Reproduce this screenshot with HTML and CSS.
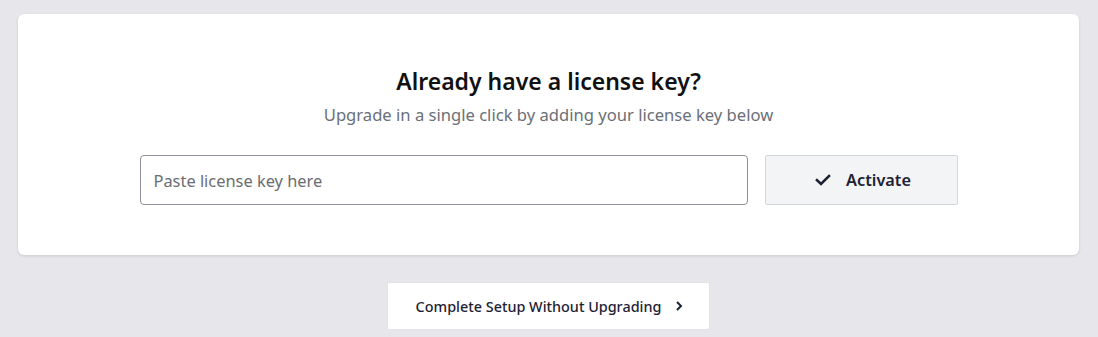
FILE: index.html
```html
<!DOCTYPE html>
<html lang="en">
<head>
  <meta charset="UTF-8">
  <meta name="viewport" content="width=device-width, initial-scale=1.0">
  <title>License Key</title>
  <link rel="stylesheet" href="styles.css">
</head>
<body>
  <div class="wrap">
    <!-- License card -->
    <div class="license-card">
      <h2 class="title">Already have a license key?</h2>
      <p class="subtitle">Upgrade in a single click by adding your license key below</p>
      <div class="key-row">
        <input class="key-input" type="text" placeholder="Paste license key here">
        <button class="activate-btn" type="button">
          <svg class="check" width="16" height="12" viewBox="0 0 16 12">
            <path d="M2 6.2 L6 10 L14 2" fill="none" stroke="currentColor" stroke-width="2.6" stroke-linecap="square"/>
          </svg>
          Activate
        </button>
      </div>
    </div>

    <!-- Skip link -->
    <div class="skip-row">
      <button class="skip-btn" type="button">
        Complete Setup Without Upgrading
        <svg class="chevron" width="8" height="12" viewBox="0 0 8 12">
          <path d="M2 2 L6 6 L2 10" fill="none" stroke="currentColor" stroke-width="2"/>
        </svg>
      </button>
    </div>
  </div>
</body>
</html>
```

FILE: styles.css
```css
/* Page base */
body {
  margin: 0;
  padding: 0;
  background: #e6e6eb;
  font-family: "Noto Sans", "Open Sans", Arial, sans-serif;
  overflow: hidden;
}

.wrap {
  padding: 14px 19px 0 18px;
}

/* Card with the key form */
.license-card {
  background: #fff;
  border-radius: 6px;
  box-shadow: 0 1px 3px rgba(0, 0, 0, 0.12);
  height: 241px;
  box-sizing: border-box;
  padding-top: 51px;
  text-align: center;
}

.title {
  margin: 0;
  font-size: 23px;
  font-weight: 600;
  line-height: 32px;
  color: #111;
}

.subtitle {
  margin: 7px 0 0;
  font-size: 16.6px;
  line-height: 22px;
  color: #6b6f78;
}

.key-row {
  display: flex;
  justify-content: center;
  gap: 17px;
  margin-top: 29px;
}

.key-input {
  width: 608px;
  height: 50px;
  box-sizing: border-box;
  border: 1px solid #8d9096;
  border-radius: 4px;
  padding: 0 13px;
  font-family: inherit;
  font-size: 16.4px;
  color: #333;
}

.key-input::placeholder {
  color: #6a6d72;
}

.activate-btn {
  width: 193px;
  height: 50px;
  display: flex;
  align-items: center;
  justify-content: center;
  gap: 15px;
  padding: 0 0 0 4px;
  background: #f3f4f6;
  border: 1px solid #d6d7db;
  border-radius: 2px;
  font-family: inherit;
  font-size: 16.3px;
  font-weight: 600;
  color: #1d2233;
}

/* Skip button under the card */
.skip-row {
  display: flex;
  justify-content: center;
  margin-top: 27px;
}

.skip-btn {
  width: 323px;
  height: 48px;
  display: flex;
  align-items: center;
  justify-content: center;
  gap: 14px;
  background: #fff;
  border: 1px solid #e2e3e7;
  border-radius: 2px;
  font-family: inherit;
  font-size: 14.4px;
  font-weight: 500;
  color: #1d2233;
  padding: 0 0 0 2px;
}
```
